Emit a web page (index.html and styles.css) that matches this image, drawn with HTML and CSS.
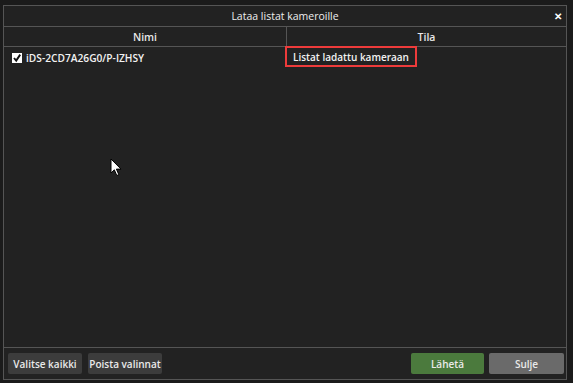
FILE: index.html
```html
<!DOCTYPE html>
<html lang="fi">
<head>
<meta charset="utf-8">
<title>Lataa listat kameroille</title>
<link rel="stylesheet" href="styles.css">
</head>
<body>
<div class="dialog">
  <div class="titlebar">
    <span class="title">Lataa listat kameroille</span>
    <span class="close">&#x2715;</span>
  </div>
  <div class="header">
    <div class="col col-name">Nimi</div>
    <div class="col col-state">Tila</div>
  </div>
  <div class="body">
    <div class="row">
      <div class="cell-name">
        <span class="check"><svg width="10" height="10" viewBox="0 0 10 10"><rect x="0" y="0" width="10" height="10" fill="#fff"/><path d="M2 5 L4.2 7.6 L8.2 1.6" stroke="#111" stroke-width="1.9" fill="none"/></svg></span>
        <span class="name">iDS-2CD7A26G0/P-IZHSY</span>
      </div>
      <div class="cell-state"><span class="status">Listat ladattu kameraan</span></div>
    </div>
  </div>
  <div class="footer">
    <div class="left">
      <button class="btn">Valitse kaikki</button>
      <button class="btn">Poista valinnat</button>
    </div>
    <div class="right">
      <button class="btn btn-send">Lähetä</button>
      <button class="btn btn-close">Sulje</button>
    </div>
  </div>
</div>
<svg class="cursor" width="14" height="20" viewBox="0 0 14 20"><path d="M1 1 L1 15 L4.3 11.8 L6.8 17.5 L8.8 16.6 L6.4 11.1 L11 11.1 Z" fill="#fff" stroke="#000" stroke-width="1"/></svg>
</body>
</html>
```
FILE: styles.css
```css
html, body {
  margin: 0;
  padding: 0;
  background: #1b1b1b;
  font-family: "Open Sans", "Liberation Sans", sans-serif;
  color: #e8e8e8;
}
body {
  width: 573px;
  height: 383px;
  position: relative;
  overflow: hidden;
}
.dialog {
  margin: 5px 0 0 3px;
  width: 562px;
  height: 373px;
  border: 1px solid #555;
  background: #222;
  display: flex;
  flex-direction: column;
}
.titlebar {
  height: 20px;
  border-bottom: 1px solid #555;
  display: flex;
  align-items: center;
  justify-content: center;
  position: relative;
  font-size: 10.5px;
}
.title {
  color: #eee;
}
.close {
  position: absolute;
  right: 4px;
  top: 3px;
  font-size: 10px;
  font-weight: bold;
  color: #fff;
}
.header {
  height: 19px;
  border-bottom: 1px solid #555;
  display: flex;
  font-size: 10.5px;
  font-weight: 600;
}
.col {
  display: flex;
  align-items: center;
  justify-content: center;
}
.col-name {
  width: 282px;
  border-right: 1px solid #555;
}
.col-state {
  flex: 1;
}
.body {
  flex: 1;
  border-bottom: 1px solid #555;
}
.row {
  display: flex;
  height: 21px;
}
.cell-name {
  width: 282px;
  display: flex;
  align-items: center;
  padding-left: 8px;
  box-sizing: border-box;
  gap: 4px;
  font-size: 10.2px;
  font-weight: 600;
}
.check {
  display: flex;
  width: 10px;
  height: 10px;
}
.name {
  color: #f2f2f2;
}
.cell-state {
  flex: 1;
  display: flex;
}
.status {
  margin-left: -1px;
  margin-top: -1px;
  width: 122px;
  height: 17px;
  border: 2px solid #ee3b3b;
  display: flex;
  align-items: center;
  padding-left: 6px;
  font-size: 10px;
  font-weight: 600;
  color: #f2f2f2;
  white-space: nowrap;
}
.footer {
  height: 31px;
  display: flex;
  justify-content: space-between;
  padding: 5px 2px 0 4px;
  box-sizing: border-box;
}
.left, .right {
  display: flex;
  gap: 6px;
  align-items: flex-start;
}
.right {
  gap: 5px;
}
.btn {
  width: 74px;
  height: 21px;
  border: none;
  border-radius: 2px;
  background: #3c3c3c;
  color: #eaeaea;
  font-family: "Open Sans", "Liberation Sans", sans-serif;
  font-size: 10px;
  font-weight: 600;
  padding: 0;
  margin: 0;
  white-space: nowrap;
}
.btn-send {
  width: 73px;
  background: #4b7a3d;
}
.btn-close {
  width: 75px;
  background: #6a6a6a;
}
.cursor {
  position: absolute;
  left: 110px;
  top: 158px;
}
```
